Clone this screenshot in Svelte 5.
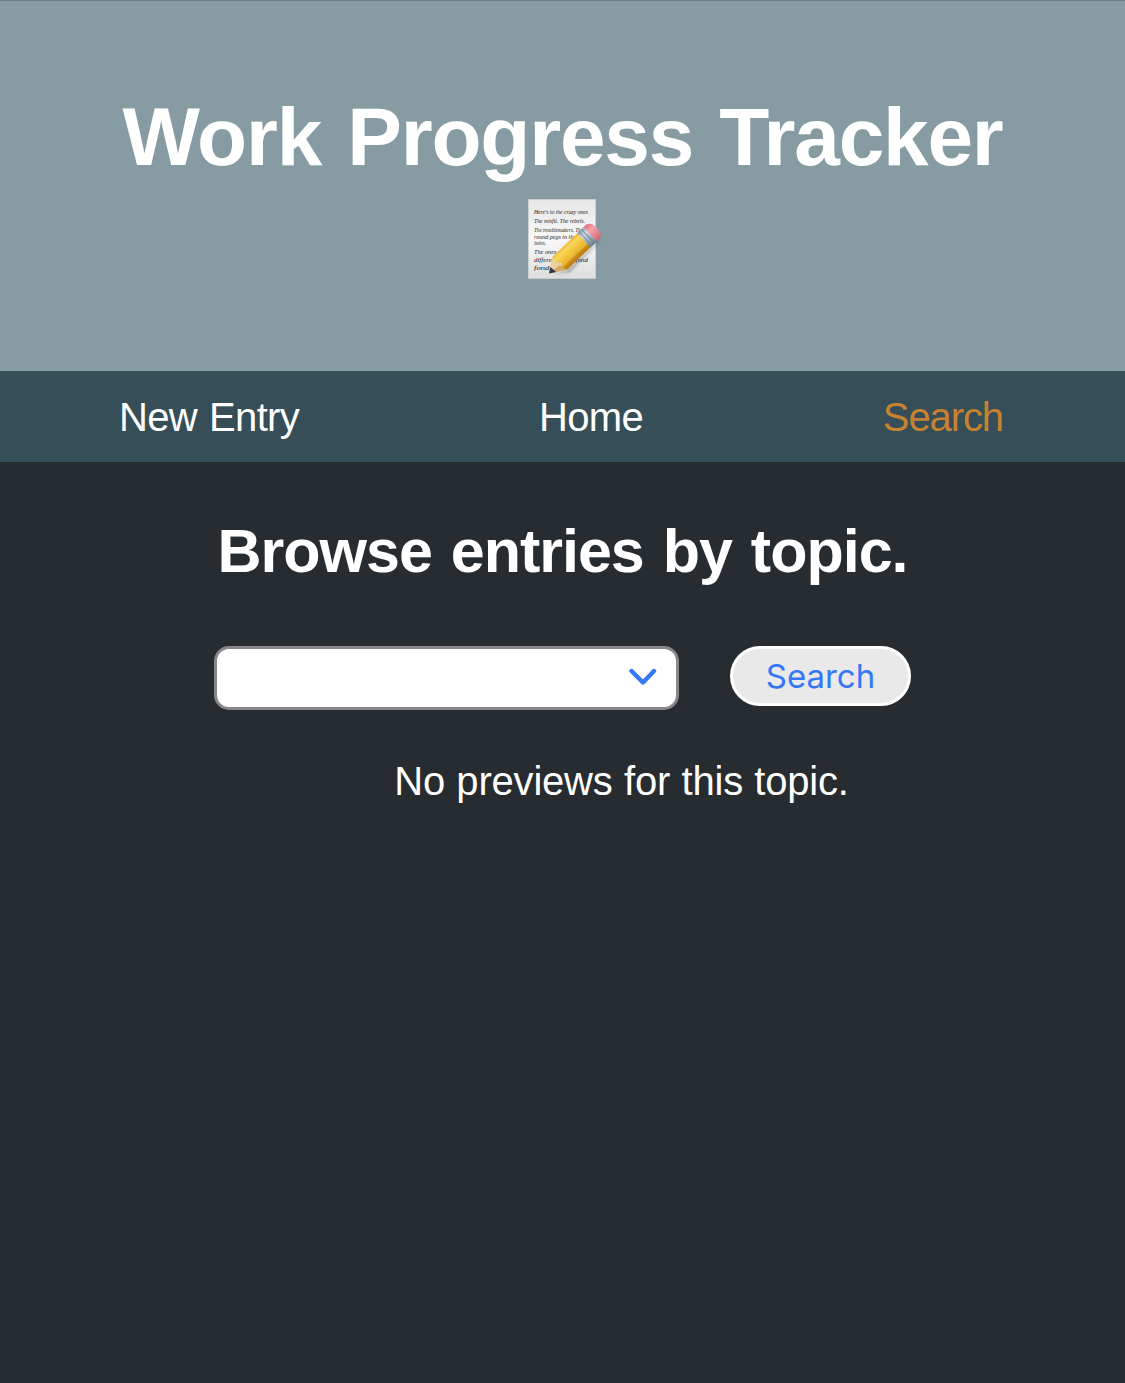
<script>
  const links = [
    { label: 'New Entry', active: false },
    { label: 'Home', active: false },
    { label: 'Search', active: true }
  ];

  const note = [
    { y: 24, w: 54, text: "Here's to the crazy ones" },
    { y: 33, w: 51, text: 'The misfit.  The rebels.' },
    { y: 41.5, w: 49, text: 'The troublemakers. The' },
    { y: 48.5, w: 42, text: 'round pegs in the' },
    { y: 55, w: 12, text: 'holes.' },
    { y: 63.5, w: 44, text: 'The ones who see' },
    { y: 71.5, w: 54, text: 'differently. not fond' },
    { y: 80, w: 24, text: 'fond of' }
  ];
</script>

<header>
  <h1>Work Progress Tracker</h1>
  <svg class="memo" viewBox="0 0 100 100" aria-hidden="true">
    <defs>
      <linearGradient id="paper" x1="0" y1="0" x2="0" y2="1">
        <stop offset="0" stop-color="#e6e6e6" />
        <stop offset="0.5" stop-color="#f8f8f8" />
        <stop offset="1" stop-color="#dedede" />
      </linearGradient>
      <linearGradient id="wood" x1="0" y1="0" x2="0" y2="1">
        <stop offset="0" stop-color="#eeb62c" />
        <stop offset="0.18" stop-color="#fbd760" />
        <stop offset="0.36" stop-color="#f6cc45" />
        <stop offset="0.72" stop-color="#eab52f" />
        <stop offset="0.78" stop-color="#cf9119" />
        <stop offset="1" stop-color="#b67a10" />
      </linearGradient>
      <linearGradient id="metal" x1="0" y1="0" x2="0" y2="1">
        <stop offset="0" stop-color="#8ba0b2" />
        <stop offset="0.3" stop-color="#cfdae2" />
        <stop offset="1" stop-color="#667b8d" />
      </linearGradient>
      <linearGradient id="rubber" x1="0" y1="0" x2="0" y2="1">
        <stop offset="0" stop-color="#dc717c" />
        <stop offset="0.35" stop-color="#f5a2a9" />
        <stop offset="1" stop-color="#cf6571" />
      </linearGradient>
      <filter id="shade" x="-20%" y="-50%" width="140%" height="200%">
        <feGaussianBlur stdDeviation="1.2" />
      </filter>
    </defs>
    <rect x="13.4" y="9.5" width="67.2" height="79" fill="url(#paper)" stroke="#cfd2d2" stroke-width="0.7" />
    <g class="writing">
      {#each note as line}
        <text x="19" y={line.y} textLength={line.w} lengthAdjust="spacingAndGlyphs">{line.text}</text>
      {/each}
    </g>
    <g transform="translate(34 83.500) rotate(-43.5) scale(0.98 1.2)">
      <path d="M3 3 16 8.500H61L64 6 60 9.500 16 11Z" fill="#333" opacity="0.4" filter="url(#shade)" />
      <path d="M0 0 14 -8 16 8Z" fill="#eed09c" />
      <path d="M0 0 14 1 16 8Z" fill="#d3aa6c" />
      <path d="M0 0 5.500 -3.200 6.300 3.200Z" fill="#303a40" />
      <path d="M14 -8H50V8H16L14.500 4 16 0 13.500 -4Z" fill="url(#wood)" />
      <rect x="49" y="-8.2" width="9" height="16.4" fill="url(#metal)" />
      <path d="M51.5 -8V8M55 -8V8" stroke="#71889a" stroke-width="0.8" />
      <path d="M58 -8.2H62Q67.500 -7 67.500 0T62 8.200H58Z" fill="url(#rubber)" />
    </g>
  </svg>
</header>

<nav>
  {#each links as link}
    <a href="#top" class:active={link.active}>{link.label}</a>
  {/each}
</nav>

<main>
  <h2>Browse entries by topic.</h2>
  <div class="controls">
    <div class="select" role="combobox" aria-label="Topic" aria-expanded="false" aria-controls="results" tabindex="0">
      <svg class="chevron" viewBox="0 0 28 18" aria-hidden="true"><path d="M2.500 3 14 14.500 25 3" /></svg>
    </div>
    <button>Search</button>
  </div>
  <p id="results">No previews for this topic.</p>
</main>

<style>
  :global(body) {
    background: #272c30;
    color: #fff;
    font-family: 'Liberation Sans', Arial, sans-serif;
  }
  header {
    box-sizing: border-box;
    height: 371px;
    padding-top: 88px;
    display: flex;
    flex-direction: column;
    align-items: center;
    background: #869ca2;
    border-top: 1px solid #6a8086;
  }
  h1 {
    margin: 0;
    font-size: 82px;
    line-height: 96px;
    font-weight: 700;
    white-space: nowrap;
    letter-spacing: -1.2px;
    word-spacing: 4.5px;
  }
  .memo {
    width: 100px;
    height: 100px;
    margin-top: 5px;
    margin-left: 5px;
    flex: none;
  }
  .writing text {
    font: italic 7px 'Liberation Serif', serif;
    fill: #222;
  }
  nav {
    box-sizing: border-box;
    height: 91px;
    padding: 0 122px 0 119px;
    display: flex;
    justify-content: space-between;
    align-items: center;
    background: #364e58;
  }
  a {
    color: #fff;
    text-decoration: none;
    font-size: 40px;
    line-height: 46px;
    white-space: nowrap;
    letter-spacing: -0.65px;
    word-spacing: 1.5px;
  }
  .active {
    color: #c68230;
    letter-spacing: -1.1px;
  }
  main {
    display: flex;
    flex-direction: column;
    align-items: center;
  }
  h2 {
    margin: 53px 0 0;
    font-size: 61px;
    line-height: 72px;
    white-space: nowrap;
    letter-spacing: -1px;
    word-spacing: 3px;
  }
  .controls {
    display: flex;
    gap: 51px;
    margin-top: 59px;
    align-items: flex-start;
  }
  .select {
    box-sizing: border-box;
    width: 465px;
    height: 64px;
    border: 3px solid #88878b;
    border-radius: 15px;
    background: #fff;
    display: flex;
    justify-content: flex-end;
    padding: 19px 19px 0 0;
  }
  .chevron {
    width: 28px;
    height: 18px;
  }
  .chevron path {
    fill: none;
    stroke: #3478f6;
    stroke-width: 4.400;
    stroke-linecap: round;
    stroke-linejoin: round;
  }
  button {
    box-sizing: border-box;
    width: 181px;
    height: 60px;
    padding: 0;
    border: 3px solid #fff;
    border-radius: 30px;
    background: #e9e9ea;
    color: #3478f6;
    font: 400 33px/54px Inter, sans-serif;
  }
  p {
    margin: 48px 0 0 118px;
    font-size: 40px;
    line-height: 46px;
    white-space: nowrap;
    letter-spacing: -0.2px;
    word-spacing: 0.5px;
  }
</style>
